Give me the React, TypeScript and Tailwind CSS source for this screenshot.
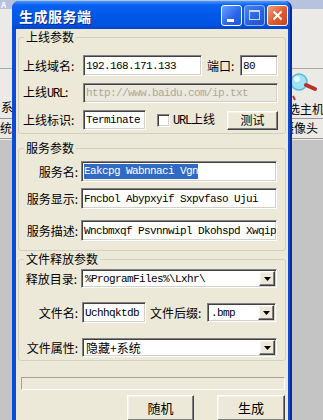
import React from "react";

const CJK = "font-['Noto_Sans_CJK_SC',sans-serif]";
const MONO = "font-['Liberation_Mono',monospace] text-[11px] tracking-[-0.6px]";
const LMONO = "font-['Liberation_Mono',monospace] text-[12px] tracking-[-1.2px]";
const SUNKEN =
  "border border-t-[#848284] border-l-[#848284] border-b-white border-r-white shadow-[inset_1px_1px_0_#424142,inset_-1px_-1px_0_#d4d0c8]";
const RAISED =
  "bg-[#ece9d8] border border-t-white border-l-white border-b-[#404040] border-r-[#404040] shadow-[inset_-1px_-1px_0_#808080,inset_1px_1px_0_#f4f3ee]";

function Arrow() {
  return (
    <div className={`${RAISED} w-[16px] h-full flex items-center justify-center shrink-0`}>
      <svg width="7" height="4" viewBox="0 0 7 4">
        <polygon points="0,0 7,0 3.5,4" fill="#000" />
      </svg>
    </div>
  );
}

function Field({ w, h, children, bg = "bg-white" }: { w: string; h: string; children?: React.ReactNode; bg?: string }) {
  return (
    <div className={`${SUNKEN} ${bg} ${w} ${h} flex items-center pl-[2px] overflow-hidden whitespace-nowrap shrink-0`}>
      {children}
    </div>
  );
}

function Combo({ w, h, children }: { w: string; h: string; children?: React.ReactNode }) {
  return (
    <div className={`${SUNKEN} bg-white ${w} ${h} flex items-stretch p-[1px] shrink-0`}>
      <div className="flex-1 flex items-center pl-[2px] overflow-hidden whitespace-nowrap">{children}</div>
      <Arrow />
    </div>
  );
}

function Group({ title, className, children }: { title: string; className: string; children: React.ReactNode }) {
  return (
    <div className={`relative border border-[#d0d0bf] rounded-[3px] ${className}`}>
      <div className={`absolute -top-[9px] left-[5px] px-[2px] bg-[#ece9d8] text-[12px] leading-[16px] text-black ${CJK}`}>
        {title}
      </div>
      {children}
    </div>
  );
}

export default function App() {
  return (
    <div className={`relative w-[323px] h-[420px] overflow-hidden bg-[#c4c4c4] ${CJK}`}>
      {/* desktop / app behind */}
      <div className="absolute left-0 top-0 w-[323px] h-[140px] bg-[#ebeae6]" />
      <div className="absolute left-0 top-0 w-[323px] h-[9px] bg-[#b7c3dd]" />
      <div className="absolute left-[1px] top-0 text-[8px] leading-[9px] text-white font-bold">A</div>
      <div className="absolute left-0 top-[68px] w-[323px] h-px bg-[#a8a8a8]" />
      <div className="absolute left-0 top-[118px] w-[323px] h-px bg-[#9a9a9a]" />
      <div className="absolute left-0 top-[138px] w-[323px] h-px bg-[#9a9a9a]" />
      <div className="absolute left-[1px] top-[100px] text-[12px] leading-[14px] text-black">系</div>
      <div className="absolute left-0 top-[121px] text-[12px] leading-[14px] text-black">统</div>
      <div className="absolute left-[288px] top-[102px] text-[12px] leading-[14px] text-black whitespace-nowrap">选主机</div>
      <div className="absolute left-[282px] top-[121px] text-[12px] leading-[14px] text-black whitespace-nowrap">摄像头</div>
      <svg className="absolute left-[290px] top-[70px]" width="28" height="32" viewBox="0 0 28 32">
        <circle cx="9" cy="12" r="8" fill="#9fe3f4" stroke="#58b8d8" strokeWidth="1.5" />
        <circle cx="7" cy="9" r="3" fill="#e6fbff" />
        <line x1="16" y1="15" x2="25" y2="19" stroke="#b8322a" strokeWidth="4" strokeLinecap="round" />
        <line x1="3" y1="26" x2="5" y2="30" stroke="#b8322a" strokeWidth="2" />
      </svg>

      {/* window */}
      <div className="absolute left-[12px] top-[1px] w-[280px] h-[440px] flex flex-col rounded-t-[7px] overflow-hidden bg-[#0b4bd6] border-r-[2px] border-r-[#082c96]">
        {/* title bar */}
        <div className="h-[28px] shrink-0 flex items-center pl-[7px] pr-[2px] bg-[linear-gradient(to_bottom,#4a9aff_0%,#0a62f2_14%,#0058ea_50%,#0054e2_82%,#0046cc_100%)]">
          <div className="flex-1 text-white font-bold text-[14px] leading-[16px] tracking-[0.5px] [text-shadow:1px_1px_0_#0a2a8a] pt-[1px]">
            生成服务端
          </div>
          <div className="flex gap-[2px] items-center">
            <div className="w-[21px] h-[21px] rounded-[3px] border border-white bg-[linear-gradient(135deg,#6aa2ff,#2a64e8_60%,#2458d8)] relative">
              <div className="absolute left-[5px] top-[13px] w-[7px] h-[3px] bg-white" />
            </div>
            <div className="w-[21px] h-[21px] rounded-[3px] border border-[#8eb2f6] bg-[linear-gradient(135deg,#4e86ee,#2a5fe0_60%,#2552cc)] relative">
              <div className="absolute left-[4px] top-[4px] w-[11px] h-[10px] border border-[#c8d8fa] border-t-[2px]" />
            </div>
            <div className="w-[21px] h-[21px] rounded-[3px] border border-white bg-[linear-gradient(135deg,#f0a080,#e05a2c_55%,#c84420)] flex items-center justify-center">
              <svg width="11" height="11" viewBox="0 0 11 11">
                <path d="M1.5 1.5 L9.5 9.5 M9.5 1.5 L1.5 9.5" stroke="#fff" strokeWidth="2" />
              </svg>
            </div>
          </div>
        </div>

        {/* client */}
        <div className="flex-1 ml-[4px] mr-[2px] bg-[#ece9d8] flex flex-col px-[2px] pt-[8px] text-[12px] leading-[14px] text-black">
          {/* group 1 */}
          <Group title="上线参数" className="pt-[17px] pb-[3px] pl-[4px] pr-[7px] flex flex-col gap-[7px]">
            <div className="h-[21px] flex items-center">
              <div className="w-[60px]">上线域名:</div>
              <Field w="w-[119px]" h="h-[21px]">
                <span className={MONO}>192.168.171.133</span>
              </Field>
              <div className="ml-[5px] w-[33px]">端口:</div>
              <Field w="w-[38px]" h="h-[21px]">
                <span className={MONO}>80</span>
              </Field>
            </div>
            <div className="h-[20px] flex items-center">
              <div className="w-[60px] whitespace-nowrap">
                上线<span className={LMONO}>URL</span>:
              </div>
              <Field w="w-[195px]" h="h-[20px]" bg="bg-[#ebe9dd]">
                <span className={`${MONO} text-[#aca899]`}>http://www.baidu.com/ip.txt</span>
              </Field>
            </div>
            <div className="h-[20px] flex items-center">
              <div className="w-[60px]">上线标识:</div>
              <Field w="w-[63px]" h="h-[20px]">
                <span className={MONO}>Terminate</span>
              </Field>
              <div className={`${SUNKEN} bg-white ml-[11px] w-[13px] h-[13px] shrink-0`} />
              <div className="ml-[3px] whitespace-nowrap">
                <span className={LMONO}>URL</span>上线
              </div>
              <div className={`${RAISED} ml-auto w-[51px] h-[19px] flex items-center justify-center`}>测试</div>
            </div>
          </Group>

          {/* group 2 */}
          <Group title="服务参数" className="mt-[14px] pt-[12px] pb-[9px] pr-[8px] flex flex-col">
            <div className="h-[21px] flex items-center">
              <div className="w-[62px] pr-[3px] text-right">服务名:</div>
              <Field w="w-[196px]" h="h-[21px]">
                <span className={`${MONO} bg-[#316ac5] text-white leading-[15px]`}>Eakcpg Wabnnaci Vgn</span>
              </Field>
            </div>
            <div className="mt-[6px] h-[21px] flex items-center">
              <div className="w-[62px] pr-[3px] text-right">服务显示:</div>
              <Field w="w-[196px]" h="h-[21px]">
                <span className={MONO}>Fncbol Abypxyif Sxpvfaso Ujui</span>
              </Field>
            </div>
            <div className="mt-[11px] h-[21px] flex items-center">
              <div className="w-[62px] pr-[3px] text-right">服务描述:</div>
              <Field w="w-[196px]" h="h-[21px]">
                <span className={MONO}>Wncbmxqf Psvnnwipl Dkohspd Xwqip</span>
              </Field>
            </div>
          </Group>

          {/* group 3 */}
          <Group title="文件释放参数" className="mt-[8px] pt-[9px] pb-[3px] pr-[8px] flex flex-col">
            <div className="h-[19px] flex items-center">
              <div className="w-[62px] pr-[4px] text-right">释放目录:</div>
              <Combo w="w-[196px]" h="h-[19px]">
                <span className={MONO}>%ProgramFiles%\Lxhr\</span>
              </Combo>
            </div>
            <div className="mt-[14px] h-[21px] flex items-center">
              <div className="w-[63px] pr-[4px] text-right">文件名:</div>
              <Field w="w-[64px]" h="h-[21px]">
                <span className={MONO}>Uchhqktdb</span>
              </Field>
              <div className="ml-[4px] w-[57px] whitespace-nowrap">文件后缀:</div>
              <Combo w="w-[69px]" h="h-[19px]">
                <span className={MONO}>.bmp</span>
              </Combo>
            </div>
            <div className="mt-[15px] h-[19px] flex items-center">
              <div className="w-[63px] pr-[4px] text-right">文件属性:</div>
              <Combo w="w-[195px]" h="h-[19px]">
                <span>隐藏+系统</span>
              </Combo>
            </div>
          </Group>

          {/* status */}
          <div className="mt-[16px] ml-[3px] mr-[1px] h-[13px] border border-t-[#a0a0a0] border-l-[#a0a0a0] border-b-white border-r-white" />

          {/* buttons */}
          <div className="mt-[5px] flex justify-end gap-[23px] pr-[1px]">
            <div className={`${RAISED} w-[67px] h-[26px] flex items-center justify-center text-[13px]`}>随机</div>
            <div className={`${RAISED} w-[68px] h-[26px] flex items-center justify-center text-[13px]`}>生成</div>
          </div>
        </div>
      </div>
    </div>
  );
}
